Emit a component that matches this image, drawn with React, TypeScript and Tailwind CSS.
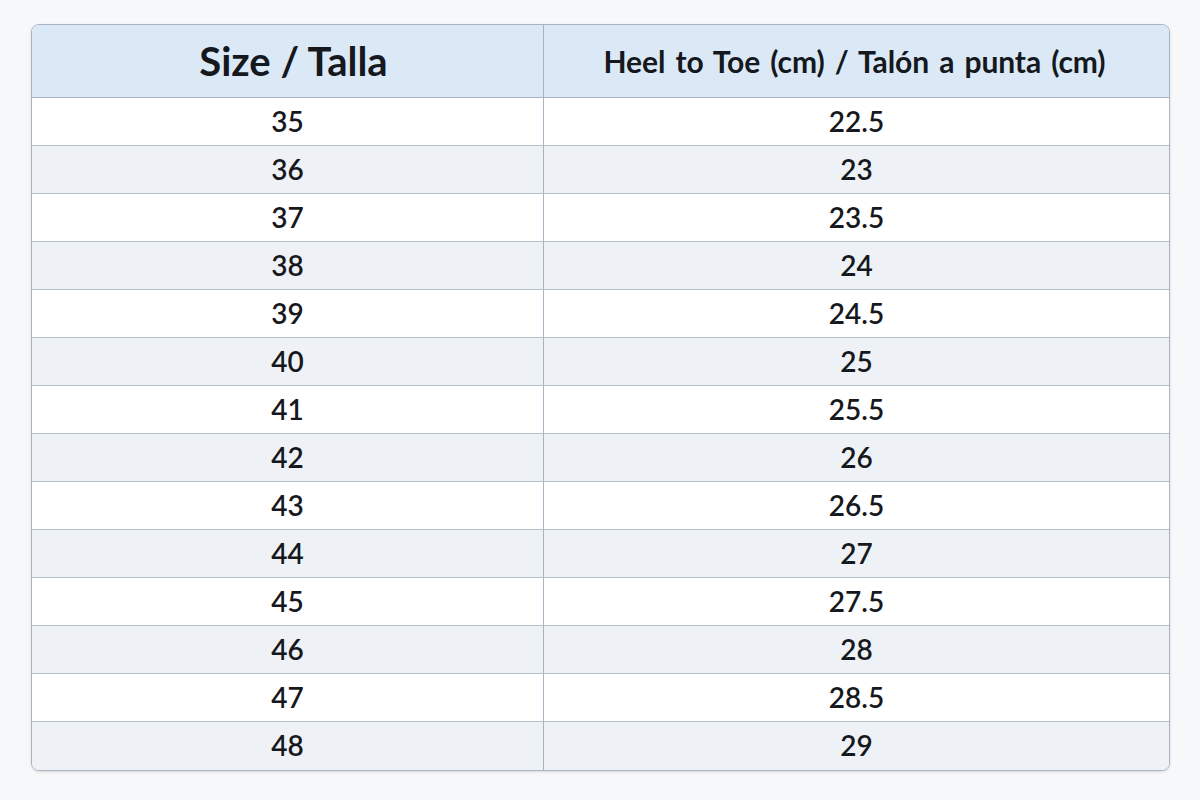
const rows: [string, string][] = [
  ['35', '22.5'],
  ['36', '23'],
  ['37', '23.5'],
  ['38', '24'],
  ['39', '24.5'],
  ['40', '25'],
  ['41', '25.5'],
  ['42', '26'],
  ['43', '26.5'],
  ['44', '27'],
  ['45', '27.5'],
  ['46', '28'],
  ['47', '28.5'],
  ['48', '29'],
];

export default function App() {
  return (
    <main className="w-[1200px] h-[800px] bg-[#f7f8f9] pt-[24px] pl-[31px] font-['Lato',sans-serif] text-[#15181d]">
      <div className="w-[1139px] rounded-[8px] border-[1.5px] border-[#a8b4c1] overflow-hidden bg-white shadow-[0_1px_3px_rgba(0,0,0,0.12)]">
        <div className="grid grid-cols-[512px_1fr] h-[73px] bg-[#dbe9f7] border-b-[1.5px] border-[#a8b4c1]">
          <div className="flex items-center justify-center border-r-[1.5px] border-[#a8b4c1] text-[40px] font-bold pl-[12px]">
            Size / Talla
          </div>
          <div className="flex items-center justify-center text-[30px] font-bold tracking-[-0.1px] [word-spacing:3px] pr-[4px]">
            Heel to Toe (cm) / Talón a punta (cm)
          </div>
        </div>
        {rows.map(([size, cm], i) => (
          <div
            key={size}
            className={`grid grid-cols-[512px_1fr] h-[48px] text-[28px] font-semibold ${i % 2 === 1 ? 'bg-[#eef2f6]' : 'bg-white'} ${i < rows.length - 1 ? 'border-b-[1.5px] border-[#b3bfcb]' : ''}`}
          >
            <div className="flex items-center justify-center pb-[2px] border-r-[1.5px] border-[#a8b4c1]">{size}</div>
            <div className="flex items-center justify-center pb-[2px]">{cm}</div>
          </div>
        ))}
      </div>
    </main>
  );
}
